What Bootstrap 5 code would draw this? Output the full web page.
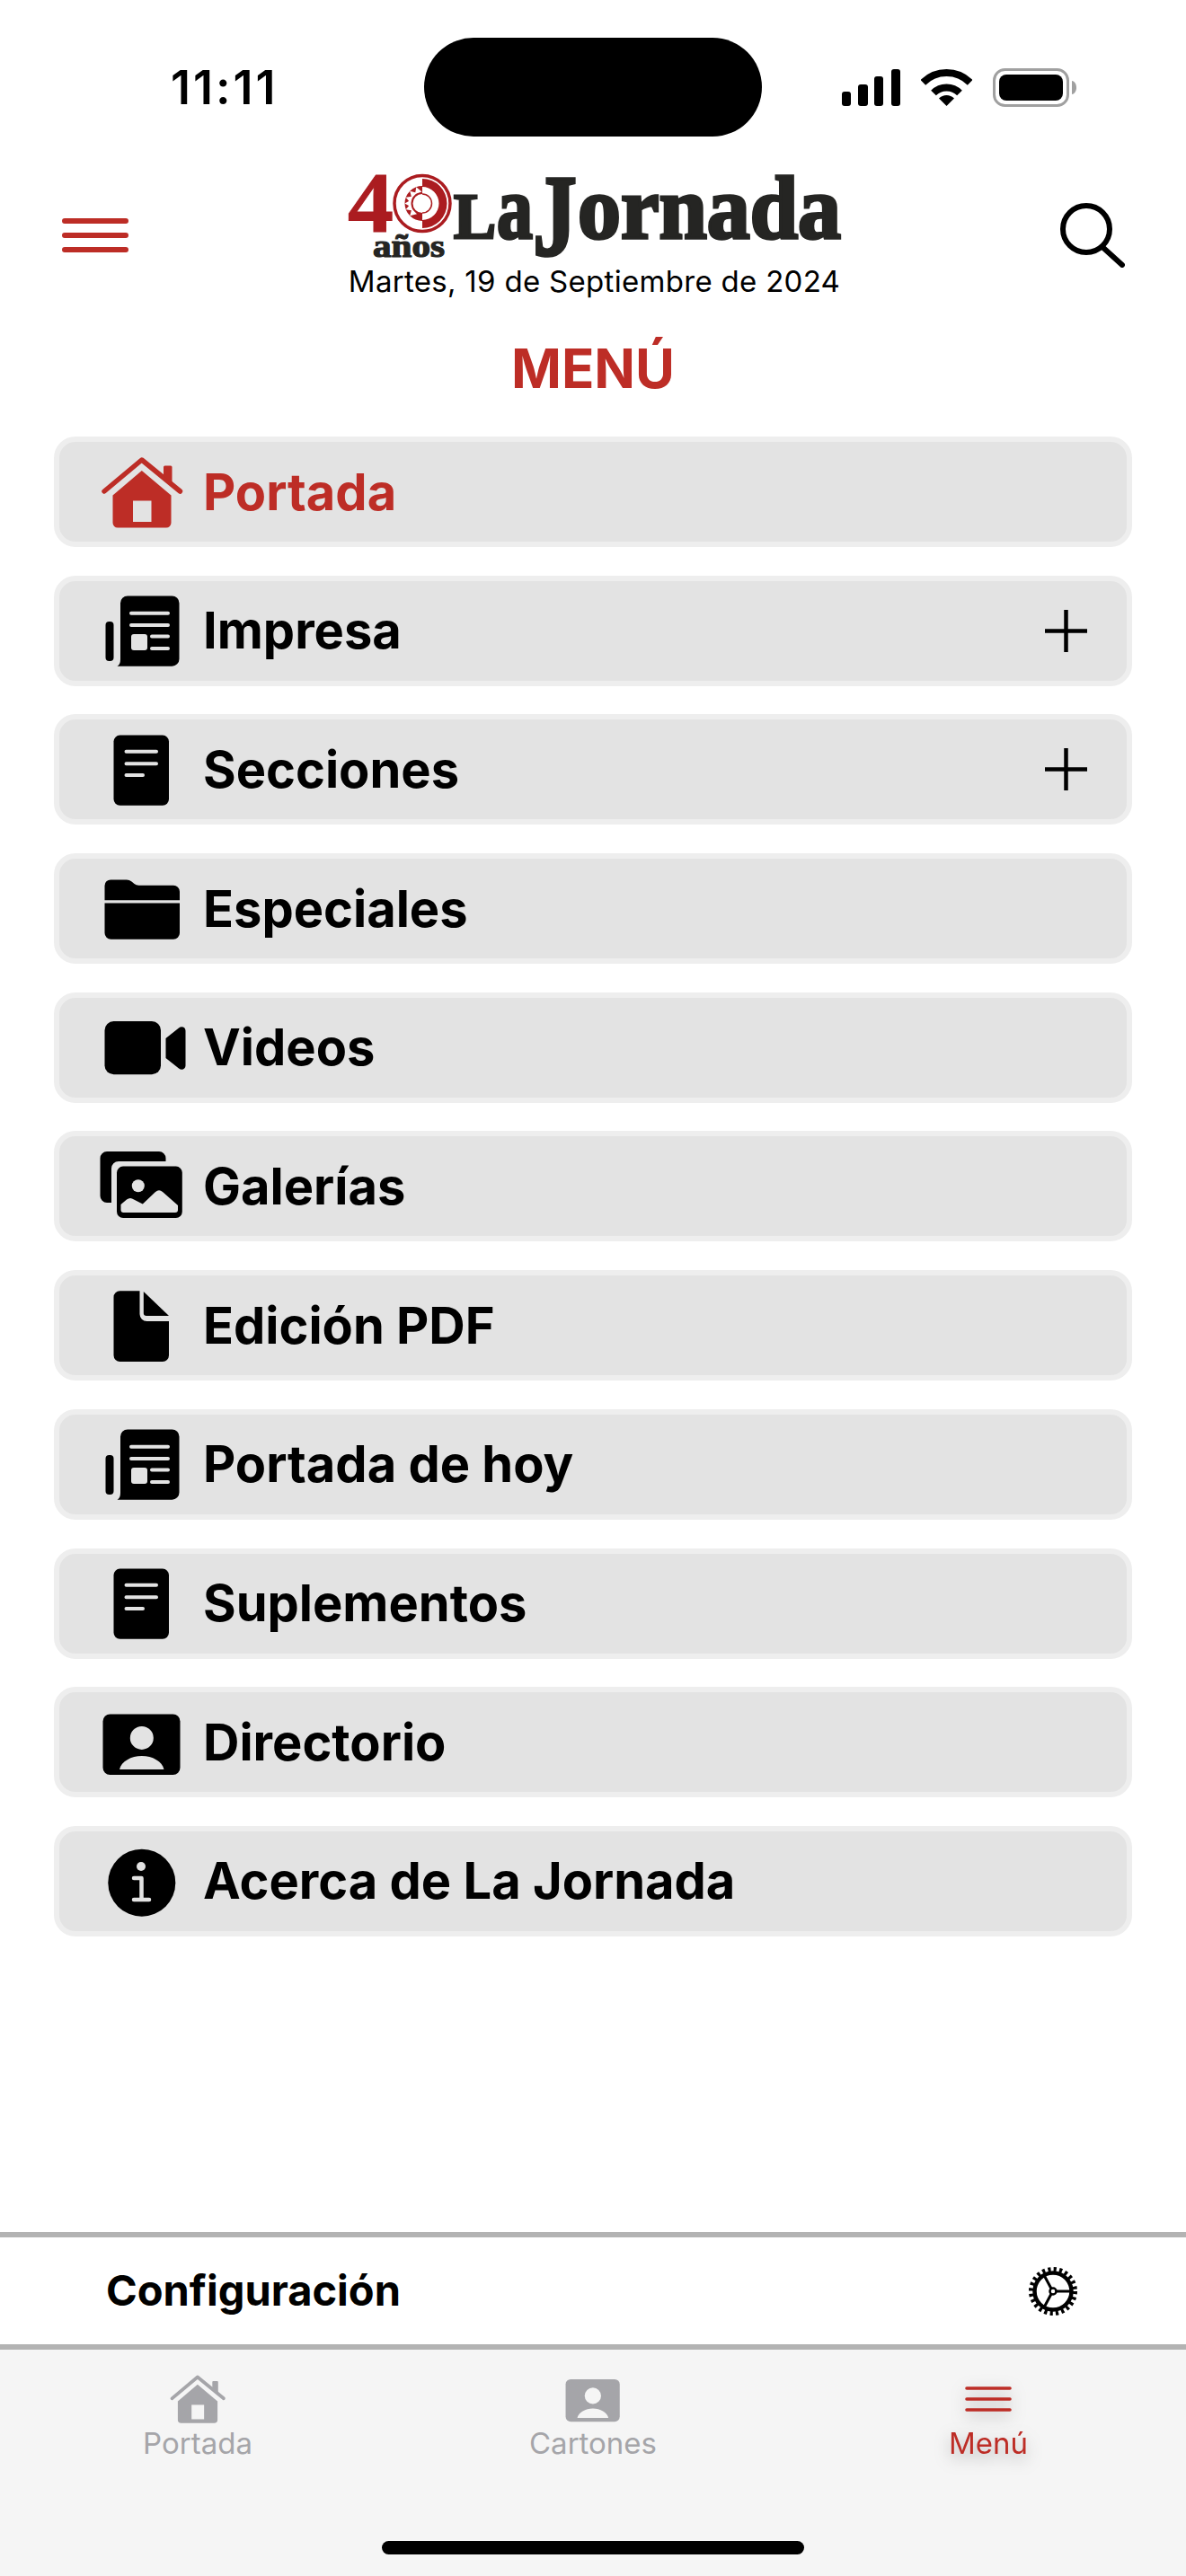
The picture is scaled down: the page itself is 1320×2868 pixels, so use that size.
<!DOCTYPE html>
<html lang="es">
<head>
    <meta charset="UTF-8">
    <meta name="viewport" content="width=device-width, initial-scale=1.0">
    <title>La Jornada - Menú</title>
    <link href="https://cdn.jsdelivr.net/npm/bootstrap@5.3.0/dist/css/bootstrap.min.css" rel="stylesheet">
    <style>
        body { font-family: Inter, "Liberation Sans", sans-serif; background: #fff; color: #000; }
        .phone { width: 1320px; height: 2868px; overflow: hidden; --cut: #e3e3e3; }
        .status-row { padding-top: 42px; height: 152px; }
        .status-side { width: 472px; }
        .status-time { font-size: 52px; font-weight: 600; padding-left: 190px; line-height: 1; padding-top: 2px; letter-spacing: 3px; }
        .status-icons { padding-left: 89px; gap: 23px; }
        .island { width: 376px; height: 110px; background: #000; border-radius: 55px; }
        .top-head { margin-top: 40px; padding: 0 68px 0 69px; height: 140px; }
        .logo-box { width: 552px; overflow: visible; }
        .date-line { font-size: 33px; line-height: 40px; letter-spacing: .3px; white-space: nowrap; margin-top: 4px; }
        .menu-title { color: #bd2d26; font-size: 60px; font-weight: 700; line-height: 72px; margin: 42px 0 0; }
        .menu-list { margin: 40px 60px 0; gap: 31.7px; }
        .menu-row { height: 123px; background: #e3e3e3; border: 6px solid #eee; border-radius: 24px; padding-left: 42px; gap: 18px; font-size: 56px; font-weight: 700; color: #000; text-decoration: none; }
        .menu-row.is-current { color: #bd2d26; }
        .row-plus { margin-right: 44px; }
        .config-bar { height: 131px; border-top: 6px solid #b3b3b3; border-bottom: 6px solid #b3b3b3; padding: 0 120px 0 118px; font-size: 47px; font-weight: 700; }
        .tab-bar { background: #f5f5f5; height: 252px; --cut: #f5f5f5; }
        .tab-item { color: #a5a5a9; font-size: 33px; line-height: 40px; padding-top: 20px; }
        .tab-item.is-current { color: #bd2d26; }
        .tab-item.is-current > * { filter: drop-shadow(0 6px 9px rgba(0,0,0,.28)); }
        .tab-icon { height: 70px; margin-bottom: -6px; }
        .home-bar { width: 470px; height: 15px; background: #000; border-radius: 8px; margin: 0 auto 24px; }
        .logo-text { font-family: "Liberation Serif", serif; font-weight: 700; fill: #252523; stroke: #252523; }
        .logo-red { fill: #ab1c20; stroke: #ab1c20; }
    </style>
</head>
<body>
    <svg width="0" height="0" class="d-none">
        <symbol id="ico-home" viewBox="0 0 100 100">
            <path d="M8 49 49.8 14 92.5 49" fill="none" stroke="currentColor" stroke-width="5.5" stroke-linecap="round" stroke-linejoin="round"/>
            <path d="M74 32V22a1.500 1.500 0 0 1 1.500-1.500H82a1.500 1.500 0 0 1 1.500 1.500V40Z" fill="currentColor"/>
            <path d="M49.800 26 82.500 53.500V84a5.500 5.500 0 0 1-5.500 5.500H23A5.500 5.500 0 0 1 17.500 84V53.500Z" fill="currentColor"/>
            <rect x="40" y="59.500" width="20.500" height="23.500" fill="var(--cut)"/>
        </symbol>
        <symbol id="ico-news" viewBox="0 0 100 100">
            <rect x="9.500" y="40" width="9" height="44" rx="4" fill="currentColor"/>
            <path d="M34 11.500H83.500a8 8 0 0 1 8 8V81.700a8 8 0 0 1-8 8H22.500Q26 88 26 82V19.500a8 8 0 0 1 8-8Z" fill="currentColor"/>
            <path d="M38 30.800H79M38 43.900H79M61 56.500H79M61 70H79" stroke="var(--cut)" stroke-width="4" stroke-linecap="round"/>
            <rect x="38" y="54" width="18" height="18" rx="3" fill="var(--cut)"/>
        </symbol>
        <symbol id="ico-doc" viewBox="0 0 100 100">
            <rect x="18.500" y="11.600" width="61.500" height="78.200" rx="7" fill="currentColor"/>
            <path d="M32.500 29.800H66M32.500 43.200H66M32.500 55.900H51" stroke="var(--cut)" stroke-width="4" stroke-linecap="round"/>
        </symbol>
        <symbol id="ico-folder" viewBox="0 0 100 100">
            <path d="M8.500 40.300V24a6.600 6.600 0 0 1 6.600-6.600H33q3 0 5.500 2l3 2.500q2 1.800 5 1.800H85a7 7 0 0 1 7 7V40.300Z" fill="currentColor"/>
            <path d="M8.500 43.500H92V76.800a7 7 0 0 1-7 7H15.500a7 7 0 0 1-7-7Z" fill="currentColor"/>
        </symbol>
        <symbol id="ico-video" viewBox="0 0 100 100">
            <rect x="8.500" y="21" width="62.500" height="59.300" rx="10" fill="currentColor"/>
            <path d="M76.500 40 91 28.500c3-2.400 7.500-1 7.500 3V70.500c0 4-4.500 5.400-7.500 3L76.500 62Z" fill="currentColor"/>
        </symbol>
        <symbol id="ico-gallery" viewBox="0 0 100 100">
            <path d="M11 68a7.500 7.500 0 0 1-7.500-7.500V18.500A7.500 7.500 0 0 1 11 11H69a7.500 7.500 0 0 1 7.500 7.500V22H24a8 8 0 0 0-8 8V68Z" fill="currentColor"/>
            <rect x="22" y="27.600" width="72.800" height="57.400" rx="7" fill="currentColor"/>
            <circle cx="45.800" cy="49.300" r="7" fill="var(--cut)"/>
            <path d="M26.500 70 33 64.500q4-3 8 0l9.800 5L65 56q4-3.500 8 0L90 71V76a3 3 0 0 1-3 3H29.500a3 3 0 0 1-3-3Z" fill="var(--cut)"/>
        </symbol>
        <symbol id="ico-pdf" viewBox="0 0 100 100">
            <path d="M25.500 11.200H47.500V37a8 8 0 0 0 8 8H80V83a7 7 0 0 1-7 7H25.500a7 7 0 0 1-7-7V18.200a7 7 0 0 1 7-7Z" fill="currentColor"/>
            <path d="M51.800 12 80 39H55a3.200 3.200 0 0 1-3.200-3.200Z" fill="currentColor"/>
        </symbol>
        <symbol id="ico-person" viewBox="0 0 100 100">
            <rect x="6.500" y="18.500" width="86" height="67.500" rx="8" fill="currentColor"/>
            <circle cx="49.800" cy="44.900" r="13" fill="var(--cut)"/>
            <path d="M25 80C27 71 38 65 49.800 65S72.500 71 74.500 80Z" fill="var(--cut)"/>
        </symbol>
        <symbol id="ico-info" viewBox="0 0 100 100">
            <circle cx="49.800" cy="52.200" r="37.500" fill="currentColor"/>
            <circle cx="49" cy="34" r="5" fill="var(--cut)"/>
            <path d="M41 47H49.500V71M41 71H58" fill="none" stroke="var(--cut)" stroke-width="4.500" stroke-linecap="round" stroke-linejoin="round"/>
        </symbol>
    </svg>

    <div class="phone d-flex flex-column">
        <!-- status bar -->
        <div class="status-row d-flex align-items-center">
            <div class="status-side status-time">11:11</div>
            <div class="island"></div>
            <div class="status-side status-icons d-flex align-items-center">
                <svg width="65" height="41" viewBox="0 0 65 41" fill="#000">
                    <rect x="0" y="25" width="10" height="16" rx="3"/>
                    <rect x="18" y="17" width="11" height="24" rx="3"/>
                    <rect x="36" y="8" width="10" height="33" rx="3"/>
                    <rect x="55" y="0" width="10" height="41" rx="3"/>
                </svg>
                <svg width="57" height="41" viewBox="0 0 57 41">
                    <path d="M2.340 14.840A37 37 0 0 1 54.660 14.840M14 26.500A20.500 20.500 0 0 1 43 26.500" fill="none" stroke="#000" stroke-width="8"/>
                    <path d="M28.500 41 20 32.500A12 12 0 0 1 37 32.500Z" fill="#000"/>
                </svg>
                <svg width="93" height="43" viewBox="0 0 93 43">
                    <rect x="1.500" y="1.500" width="82" height="40" rx="12" fill="none" stroke="#a0a0a0" stroke-width="3"/>
                    <rect x="7" y="7" width="71" height="29" rx="8" fill="#000"/>
                    <path d="M88 14c3 .5 5 3.500 5 7.500s-2 7-5 7.500Z" fill="#a0a0a0"/>
                </svg>
            </div>
        </div>

        <!-- header with logo -->
        <header class="top-head d-flex align-items-center justify-content-between">
            <svg width="74" height="40" viewBox="0 0 74 40" stroke="#bd2d26" stroke-width="6" stroke-linecap="round">
                <path d="M3 4H71M3 20H71M3 36H71"/>
            </svg>
            <div class="d-flex flex-column align-items-center">
                <svg class="logo-box" height="97" viewBox="386 192 552 97">
                    <text x="387" y="258" font-size="95" class="logo-text logo-red" stroke-width="1" textLength="51" lengthAdjust="spacingAndGlyphs">4</text>
                    <circle cx="470" cy="226.500" r="31" fill="#fff" stroke="#ab1c20" stroke-width="3.500"/>
                    <path d="M470 199A27.500 27.500 0 0 1 470 254V245A18.500 18.500 0 0 0 470 208Z" fill="#ab1c20"/>
                    <path d="M470 216A10.500 10.500 0 0 1 470 237" fill="none" stroke="#ab1c20" stroke-width="1.500"/>
                    <path d="M470 207A19.500 19.500 0 0 0 470 246V237A10.500 10.500 0 0 1 470 216Z" fill="#ab1c20"/>
                    <g fill="#fff">
                        <polygon points="470,207 466,214 474,214" transform="rotate(-135 470 226.500)"/>
                        <polygon points="470,207 466,214 474,214" transform="rotate(-110 470 226.500)"/>
                        <polygon points="470,207 466,214 474,214" transform="rotate(-90 470 226.500)"/>
                        <polygon points="470,207 466,214 474,214" transform="rotate(-70 470 226.500)"/>
                        <polygon points="470,207 466,214 474,214" transform="rotate(-45 470 226.500)"/>
                        <polygon points="470,207 466,214 474,214" transform="rotate(-20 470 226.500)"/>
                    </g>
                    <text x="415" y="286" font-size="36" class="logo-text" stroke-width="1.200" textLength="80" lengthAdjust="spacingAndGlyphs">años</text>
                    <text x="505" y="265" font-size="72" class="logo-text" stroke-width="3" textLength="47" lengthAdjust="spacingAndGlyphs">L</text>
                    <text x="553" y="265" font-size="100" class="logo-text" stroke-width="3.500" textLength="40" lengthAdjust="spacingAndGlyphs">a</text>
                    <text x="593" y="284" font-size="130" class="logo-text" stroke-width="3.500" textLength="49" lengthAdjust="spacingAndGlyphs">J</text>
                    <text x="643" y="265" font-size="100" class="logo-text" stroke-width="3.500" textLength="293" lengthAdjust="spacingAndGlyphs">ornada</text>
                </svg>
                <div class="date-line">Martes, 19 de Septiembre de 2024</div>
            </div>
            <svg width="72" height="72" viewBox="0 0 72 72" fill="none" stroke="#000" stroke-width="6" stroke-linecap="round">
                <circle cx="29" cy="29" r="26"/>
                <path d="M47 49 69 69"/>
            </svg>
        </header>

        <h1 class="menu-title text-center">MENÚ</h1>

        <nav class="menu-list d-flex flex-column">
            <a href="#" class="menu-row is-current d-flex align-items-center"><svg width="100" height="100"><use href="#ico-home"/></svg><span>Portada</span></a>
            <a href="#" class="menu-row d-flex align-items-center"><svg width="100" height="100"><use href="#ico-news"/></svg><span class="flex-grow-1">Impresa</span>
                <svg class="row-plus" width="47" height="47" viewBox="0 0 47 47" stroke="#000" stroke-width="4.500"><path d="M0 23.500H47M23.500 0V47"/></svg></a>
            <a href="#" class="menu-row d-flex align-items-center"><svg width="100" height="100"><use href="#ico-doc"/></svg><span class="flex-grow-1">Secciones</span>
                <svg class="row-plus" width="47" height="47" viewBox="0 0 47 47" stroke="#000" stroke-width="4.500"><path d="M0 23.500H47M23.500 0V47"/></svg></a>
            <a href="#" class="menu-row d-flex align-items-center"><svg width="100" height="100"><use href="#ico-folder"/></svg><span>Especiales</span></a>
            <a href="#" class="menu-row d-flex align-items-center"><svg width="100" height="100"><use href="#ico-video"/></svg><span>Videos</span></a>
            <a href="#" class="menu-row d-flex align-items-center"><svg width="100" height="100"><use href="#ico-gallery"/></svg><span>Galerías</span></a>
            <a href="#" class="menu-row d-flex align-items-center"><svg width="100" height="100"><use href="#ico-pdf"/></svg><span>Edición PDF</span></a>
            <a href="#" class="menu-row d-flex align-items-center"><svg width="100" height="100"><use href="#ico-news"/></svg><span>Portada de hoy</span></a>
            <a href="#" class="menu-row d-flex align-items-center"><svg width="100" height="100"><use href="#ico-doc"/></svg><span>Suplementos</span></a>
            <a href="#" class="menu-row d-flex align-items-center"><svg width="100" height="100"><use href="#ico-person"/></svg><span>Directorio</span></a>
            <a href="#" class="menu-row d-flex align-items-center"><svg width="100" height="100"><use href="#ico-info"/></svg><span>Acerca de La Jornada</span></a>
        </nav>

        <div class="config-bar mt-auto d-flex align-items-center justify-content-between">
            <span>Configuración</span>
            <svg width="56" height="56" viewBox="0 0 56 56" fill="none" stroke="#000">
                <circle cx="28" cy="28" r="24.500" stroke-width="5" stroke-dasharray="3.200 3.210"/>
                <circle cx="28" cy="28" r="20.500" stroke-width="4.500"/>
                <circle cx="28" cy="28" r="3.500" stroke-width="2.500"/>
                <path d="M31.500 28H48M26 25 18 10M26 31 18 46" stroke-width="3"/>
            </svg>
        </div>

        <div class="tab-bar d-flex flex-column">
            <div class="row g-0 flex-grow-1">
                <div class="col-4 tab-item text-center">
                    <div class="tab-icon d-flex justify-content-center align-items-center"><svg width="68" height="68"><use href="#ico-home"/></svg></div>
                    <div>Portada</div>
                </div>
                <div class="col-4 tab-item text-center">
                    <div class="tab-icon d-flex justify-content-center align-items-center"><svg width="70" height="70"><use href="#ico-person"/></svg></div>
                    <div>Cartones</div>
                </div>
                <div class="col-4 tab-item is-current text-center">
                    <div class="tab-icon d-flex justify-content-center align-items-center">
                        <svg width="52" height="30" viewBox="0 0 52 30" stroke="#bd2d26" stroke-width="3.600" stroke-linecap="round"><path d="M2 3H50M2 15H50M2 27H50"/></svg>
                    </div>
                    <div>Menú</div>
                </div>
            </div>
            <div class="home-bar"></div>
        </div>
    </div>

    <script src="https://cdn.jsdelivr.net/npm/bootstrap@5.3.0/dist/js/bootstrap.bundle.min.js"></script>
</body>
</html>
